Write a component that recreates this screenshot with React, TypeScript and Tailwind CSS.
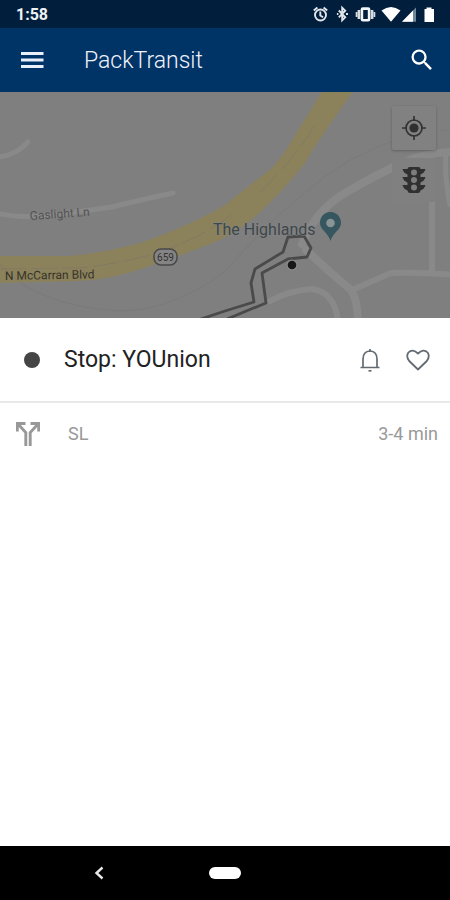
import React from 'react';
import { MdSearch } from 'react-icons/md';

const sans = "font-['Roboto','Liberation_Sans',sans-serif]";

function StatusIcons() {
  return (
    <svg className="h-5 w-32" viewBox="310 4 128 20" fill="none" aria-label="Alarm, Bluetooth, vibrate, Wi-Fi, signal, battery" role="img">
      <g stroke="#e2e6ea" strokeWidth="1.900">
        <circle cx="320.500" cy="15" r="5.500" />
        <path d="M313.800 10.500l3.600-3M327.200 10.500l-3.600-3M320.300 11.500v4l2.800 1.700" />
      </g>
      <path d="M338.800 10.500l6.400 6.800-3 3V7.700l3 3-6.400 6.600" stroke="#e2e6ea" strokeWidth="1.900" />
      <path d="M336.900 14h1.500M346 14h2" stroke="#e2e6ea" strokeWidth="1.800" />
      <rect x="361.900" y="8.600" width="7.200" height="11.600" rx="1" stroke="#f3f5f7" strokeWidth="2.600" />
      <path d="M358.900 10v9M372.100 10v9" stroke="#d8dde2" strokeWidth="2.600" />
      <path d="M356.600 12v5M374.400 12v5" stroke="#d8dde2" strokeWidth="1.800" />
      <path d="M381.500 10.500Q391 3.500 400.500 10.500L391 21.800z" fill="#fff" />
      <path d="M402 21.800L416 7.500v14.300z" fill="#6f8796" />
      <path d="M402 21.800L413 10.500v11.300z" fill="#fff" />
      <path d="M424.500 9h2V7.500h5V9h2.500v13h-9.500z" fill="#fff" />
    </svg>
  );
}

function MapDrawing() {
  return (
    <svg className={`block h-full w-full ${sans}`} viewBox="0 92 450 226" preserveAspectRatio="xMidYMid slice" role="img" aria-label="Map around The Highlands">
      <rect x="-400" y="0" width="1300" height="500" fill="#7f7f7f" />
      <g fill="none" stroke="#898989" strokeLinecap="round" strokeLinejoin="round">
        <path d="M-3 157Q15 156 28 142" strokeWidth="5" />
        <path d="M-3 213Q20 219 52 215T112 207Q140 200 173 193" strokeWidth="5" />
        <path d="M302 244Q316 210 345 193T400 164T455 152" strokeWidth="8" />
        <path d="M306 250Q327 270 351 290Q358 300 358 325" strokeWidth="8" />
        <path d="M352 290L391 273Q420 272 455 275M432 200V273" strokeWidth="6" />
        <path d="M446 152Q444 175 450 205" strokeWidth="5" />
        <path d="M270 301Q290 290 313 289Q337 294 338 325" strokeWidth="6" />
      </g>
      <path d="M-2 256H70Q108 252 140 243Q190 226 225 205L272 168Q285 153 294 137L323 90H354L319 140L305 163Q284 190 258 214Q235 235 210 244Q180 256 147 267Q110 280 78 281L-2 283z" fill="#8b825c" />
      <g fill="none" strokeWidth="1">
        <path d="M0 269L80 268Q125 263 160 252Q205 236 232 214M260 192Q292 162 314 126" stroke="#7b7565" strokeDasharray="26 5" opacity=".6" />
        <path d="M0 264Q20 289 60 301Q120 318 160 305Q200 292 224 272L263 230Q320 176 354 158Q380 145 404 137M441 130H450" stroke="#717372" opacity=".45" />
      </g>
      <path d="M198 320L225 311L254 302L251 283L255 269L283 252L288 237L304 236L311 248L307 257L288 259L262 273L266 303L227 319" fill="none" stroke="#4a4a4a" strokeWidth="2.800" strokeLinejoin="round" />
      <circle cx="292" cy="265" r="5.500" fill="#8b8b8b" />
      <circle cx="292" cy="265" r="4.300" fill="#171717" />
      <path d="M330.500 212C324 212 320 217 320 223C320 230 328 232 330.500 241C333 232 341 230 341 223C341 217 337 212 330.500 212z" fill="#365660" />
      <circle cx="330.500" cy="223" r="4.300" fill="#8a9395" />
      <rect x="154" y="249" width="23" height="16" rx="7" fill="#848484" stroke="#484848" strokeWidth="1.500" />
      <text x="165.500" y="261" fontSize="10" textAnchor="middle" fill="#333">659</text>
      <text x="30" y="220" fontSize="12" fill="#535353" transform="rotate(-4 30 220)">Gaslight Ln</text>
      <text x="5" y="280" fontSize="12" fill="#373329" transform="rotate(-1 5 280)">N McCarran Blvd</text>
      <text x="213" y="235" fontSize="16" fill="#3d474a" stroke="#858686" strokeWidth="1" paintOrder="stroke">The Highlands</text>
    </svg>
  );
}

function LocateIcon() {
  return (
    <svg className="size-6" viewBox="0 0 24 24" fill="none" stroke="#333">
      <circle cx="12" cy="12" r="8" strokeWidth="1.700" />
      <circle cx="12" cy="12" r="4.600" fill="#303030" stroke="none" />
      <path d="M12 0v5M12 19v5M0 12h5M19 12h5" strokeWidth="1.700" />
    </svg>
  );
}

function TrafficIcon() {
  return (
    <svg className="h-7 w-6" viewBox="0 0 24 28">
      <path d="M5.500 3Q5.500 1 7.500 1H16.500Q18.500 1 18.500 3H23.500Q22.500 7 18.500 8.500V11H23.500Q22.500 15 18.500 16.500V19H23.500Q22.500 23 18.500 24.500Q18 27 16 27H8Q6 27 5.500 24.500Q1.500 23 .500 19H5.500V16.500Q1.500 15 .500 11H5.500V8.500Q1.500 7 .500 3z" fill="#303030" />
      <g fill="#7d7d7d"><circle cx="12" cy="6.500" r="3" /><circle cx="12" cy="14" r="3" /><circle cx="12" cy="21.500" r="3" /></g>
    </svg>
  );
}

function SplitIcon() {
  return (
    <svg className="size-6" viewBox="0 0 24 24" fill="none" stroke="#989898" strokeWidth="2.900">
      <path d="M1.300 9.500V1.500H9.500M14.500 1.500H22.700V9.500M2 2L9.800 10.500V24M22 2L14.200 10.500V24" />
    </svg>
  );
}

function BellIcon() {
  return (
    <svg className="size-6" viewBox="0 0 24 24" fill="none" stroke="#646a71" strokeWidth="1.700" strokeLinejoin="round">
      <path d="M2.500 19.500H21.500M5 19V11Q5 3.500 12 3Q19 3.500 19 11V19M12 3.500V1" />
      <path d="M10.500 22.800H13.500" />
    </svg>
  );
}

function HeartIcon() {
  return (
    <svg className="size-6" viewBox="0 0 24 24" fill="none" stroke="#646a71" strokeWidth="1.800" strokeLinejoin="round">
      <path d="M12 21.500L3.200 13Q-.300 8.500 2.400 4.500Q6.500 .200 12 5.500Q17.500 .200 21.600 4.500Q24.300 8.500 20.800 13z" />
    </svg>
  );
}

export default function App() {
  return (
    <div className={`flex min-h-screen flex-col bg-white ${sans}`}>
      <div className="flex h-7 items-center justify-between bg-[#011f3d] pr-3 pl-4">
        <span className="pt-0.5 text-base font-bold text-[#f0f2f4]">1:58</span>
        <StatusIcons />
      </div>
      <header className="flex h-16 items-center bg-[#003366] pr-3 pl-4 text-white">
        <button type="button" aria-label="Menu" className="flex size-8 items-center justify-center">
          <svg className="h-4 w-6" viewBox="0 0 24 16" stroke="#ebeff8" strokeWidth="3"><path d="M1 1.500H23.500M1 8H23.500M1 14.500H23.500" /></svg>
        </button>
        <h1 className="ml-9 flex-1 pt-0.5 text-[23px] font-light text-[#f0f2fa]">PackTransit</h1>
        <button type="button" aria-label="Search" className="flex size-8 items-center justify-center">
          <MdSearch className="size-7" />
        </button>
      </header>
      <section className="relative h-[226px] overflow-hidden">
        <MapDrawing />
        <div className="absolute top-3.5 right-3.5 flex flex-col gap-2">
          <button type="button" aria-label="My location" className="flex size-11 items-center justify-center rounded-xs bg-[#818181] shadow-[0_1px_3px_rgba(0,0,0,0.25)]">
            <LocateIcon />
          </button>
          <button type="button" aria-label="Show traffic" className="flex size-11 items-center justify-center rounded-xs bg-[#808080]">
            <TrafficIcon />
          </button>
        </div>
      </section>
      <main className="flex flex-1 flex-col">
        <div className="flex h-[85px] items-center border-b-2 border-[#e9e9e9] pr-5 pl-6">
          <span className="size-4 rounded-full bg-[#454545]" />
          <h2 className="ml-6 flex-1 pt-0.5 text-[23px] text-[#222]">Stop: YOUnion</h2>
          <button type="button" aria-label="Notify me" className="mr-6"><BellIcon /></button>
          <button type="button" aria-label="Add to favorites"><HeartIcon /></button>
        </div>
        <div className="flex h-[62px] items-center pr-3 pl-4 text-lg text-[#999]">
          <SplitIcon />
          <span className="ml-7 flex-1">SL</span>
          <span>3-4 min</span>
        </div>
      </main>
      <nav className="grid h-[54px] grid-cols-[1fr_auto_1fr] items-center bg-black">
        <button type="button" aria-label="Back" className="mr-3 justify-self-center">
          <svg className="h-4 w-3" viewBox="0 0 12 16" fill="none" stroke="#e8e8e8" strokeWidth="2.400"><path d="M9.500 2.500L3.500 8l6 5.500" /></svg>
        </button>
        <button type="button" aria-label="Home" className="h-3 w-8 rounded-full bg-white" />
      </nav>
    </div>
  );
}
